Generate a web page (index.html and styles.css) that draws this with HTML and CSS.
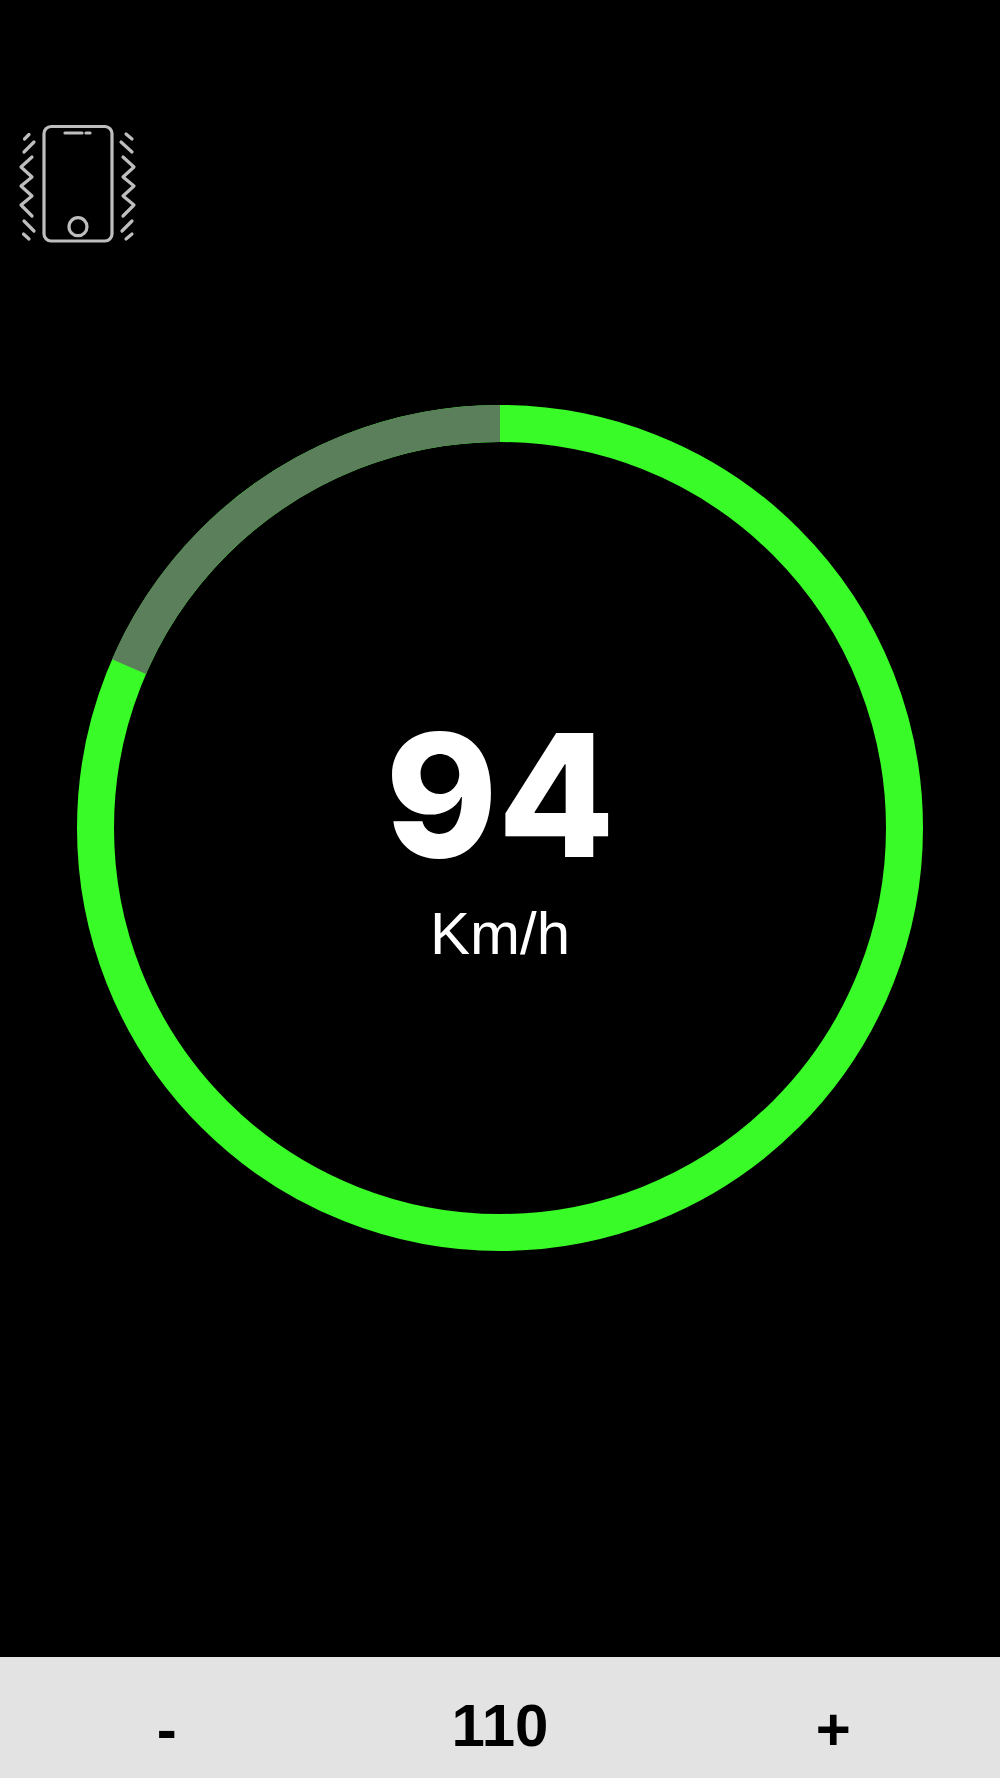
FILE: index.html
```html
<!DOCTYPE html>
<html lang="en">
<head>
<meta charset="UTF-8" />
<meta name="viewport" content="width=device-width, initial-scale=1" />
<title>Speedometer</title>
<link rel="stylesheet" href="styles.css">
</head>
<body>

<main class="app">
  <div class="stage">
    <svg class="shake-icon" viewBox="0 0 160 150" aria-label="Vibrate">
      <rect x="44" y="16.5" width="68" height="114.5" rx="7" />
      <path d="M65 23H82M86 23H90" />
      <circle cx="78" cy="116.7" r="9" />
      <!-- left waves -->
      <path d="M24.5 29L29 24.5M24 42L34 32M32 47L21 57L32 67L21 76L32 86L21 95L32 106M24 111L34 121M23.5 124L29 129" />
      <!-- right waves -->
      <path d="M126 24L132 29M121 32L132 42M123 47L134 57L123 67L134 76L123 86L134 95L123 106M132 111L122 121M132 124L126 129" />
    </svg>

    <div class="gauge">
      <svg class="gauge-ring" viewBox="0 0 846 846">
        <circle class="ring-full" cx="423" cy="423" r="404.5" />
        <path class="ring-rest" d="M423 18.5A404.5 404.5 0 0 0 52 261.6" />
      </svg>
      <div class="readout">
        <div class="speed">94</div>
        <div class="unit">Km/h</div>
      </div>
    </div>
  </div>

  <div class="limit-bar">
    <div class="limit-item limit-sign">-</div>
    <div class="limit-item">110</div>
    <div class="limit-item limit-sign">+</div>
  </div>
</main>

</body>
</html>
```

FILE: styles.css
```css
body {
  margin: 0;
  background: #000;
  font-family: "Liberation Sans", Arial, sans-serif;
}
.app {
  display: flex;
  flex-direction: column;
  height: 1778px;
}
.stage {
  flex: 1;
  padding-top: 110px;
}
.shake-icon {
  display: block;
  width: 160px;
  height: 150px;
  fill: none;
  stroke: #bebebe;
  stroke-width: 3.2;
  stroke-linecap: round;
  stroke-linejoin: round;
}
.gauge {
  position: relative;
  width: 846px;
  height: 846px;
  margin: 145px auto 0;
}
.gauge-ring {
  display: block;
  width: 846px;
  height: 846px;
  fill: none;
  stroke-width: 37;
}
.ring-full {
  stroke: #39fb27;
}
.ring-rest {
  stroke: #5a7f5a;
}
.readout {
  position: absolute;
  top: 290px;
  left: 0;
  right: 0;
  text-align: center;
  color: #fff;
}
.speed {
  font-family: Inter, "Liberation Sans", sans-serif;
  font-size: 170px;
  font-weight: 800;
  line-height: 200px;
}
.unit {
  font-size: 60px;
  line-height: 66px;
  margin-top: 6px;
}
.limit-bar {
  display: grid;
  grid-template-columns: 1fr 1fr 1fr;
  align-items: center;
  height: 121px;
  background: #e3e3e3;
  color: #000;
  text-align: center;
}
.limit-item {
  font-size: 60px;
  font-weight: 700;
  line-height: 70px;
  padding-top: 16px;
}
.limit-sign {
  padding-top: 24px;
}
```
